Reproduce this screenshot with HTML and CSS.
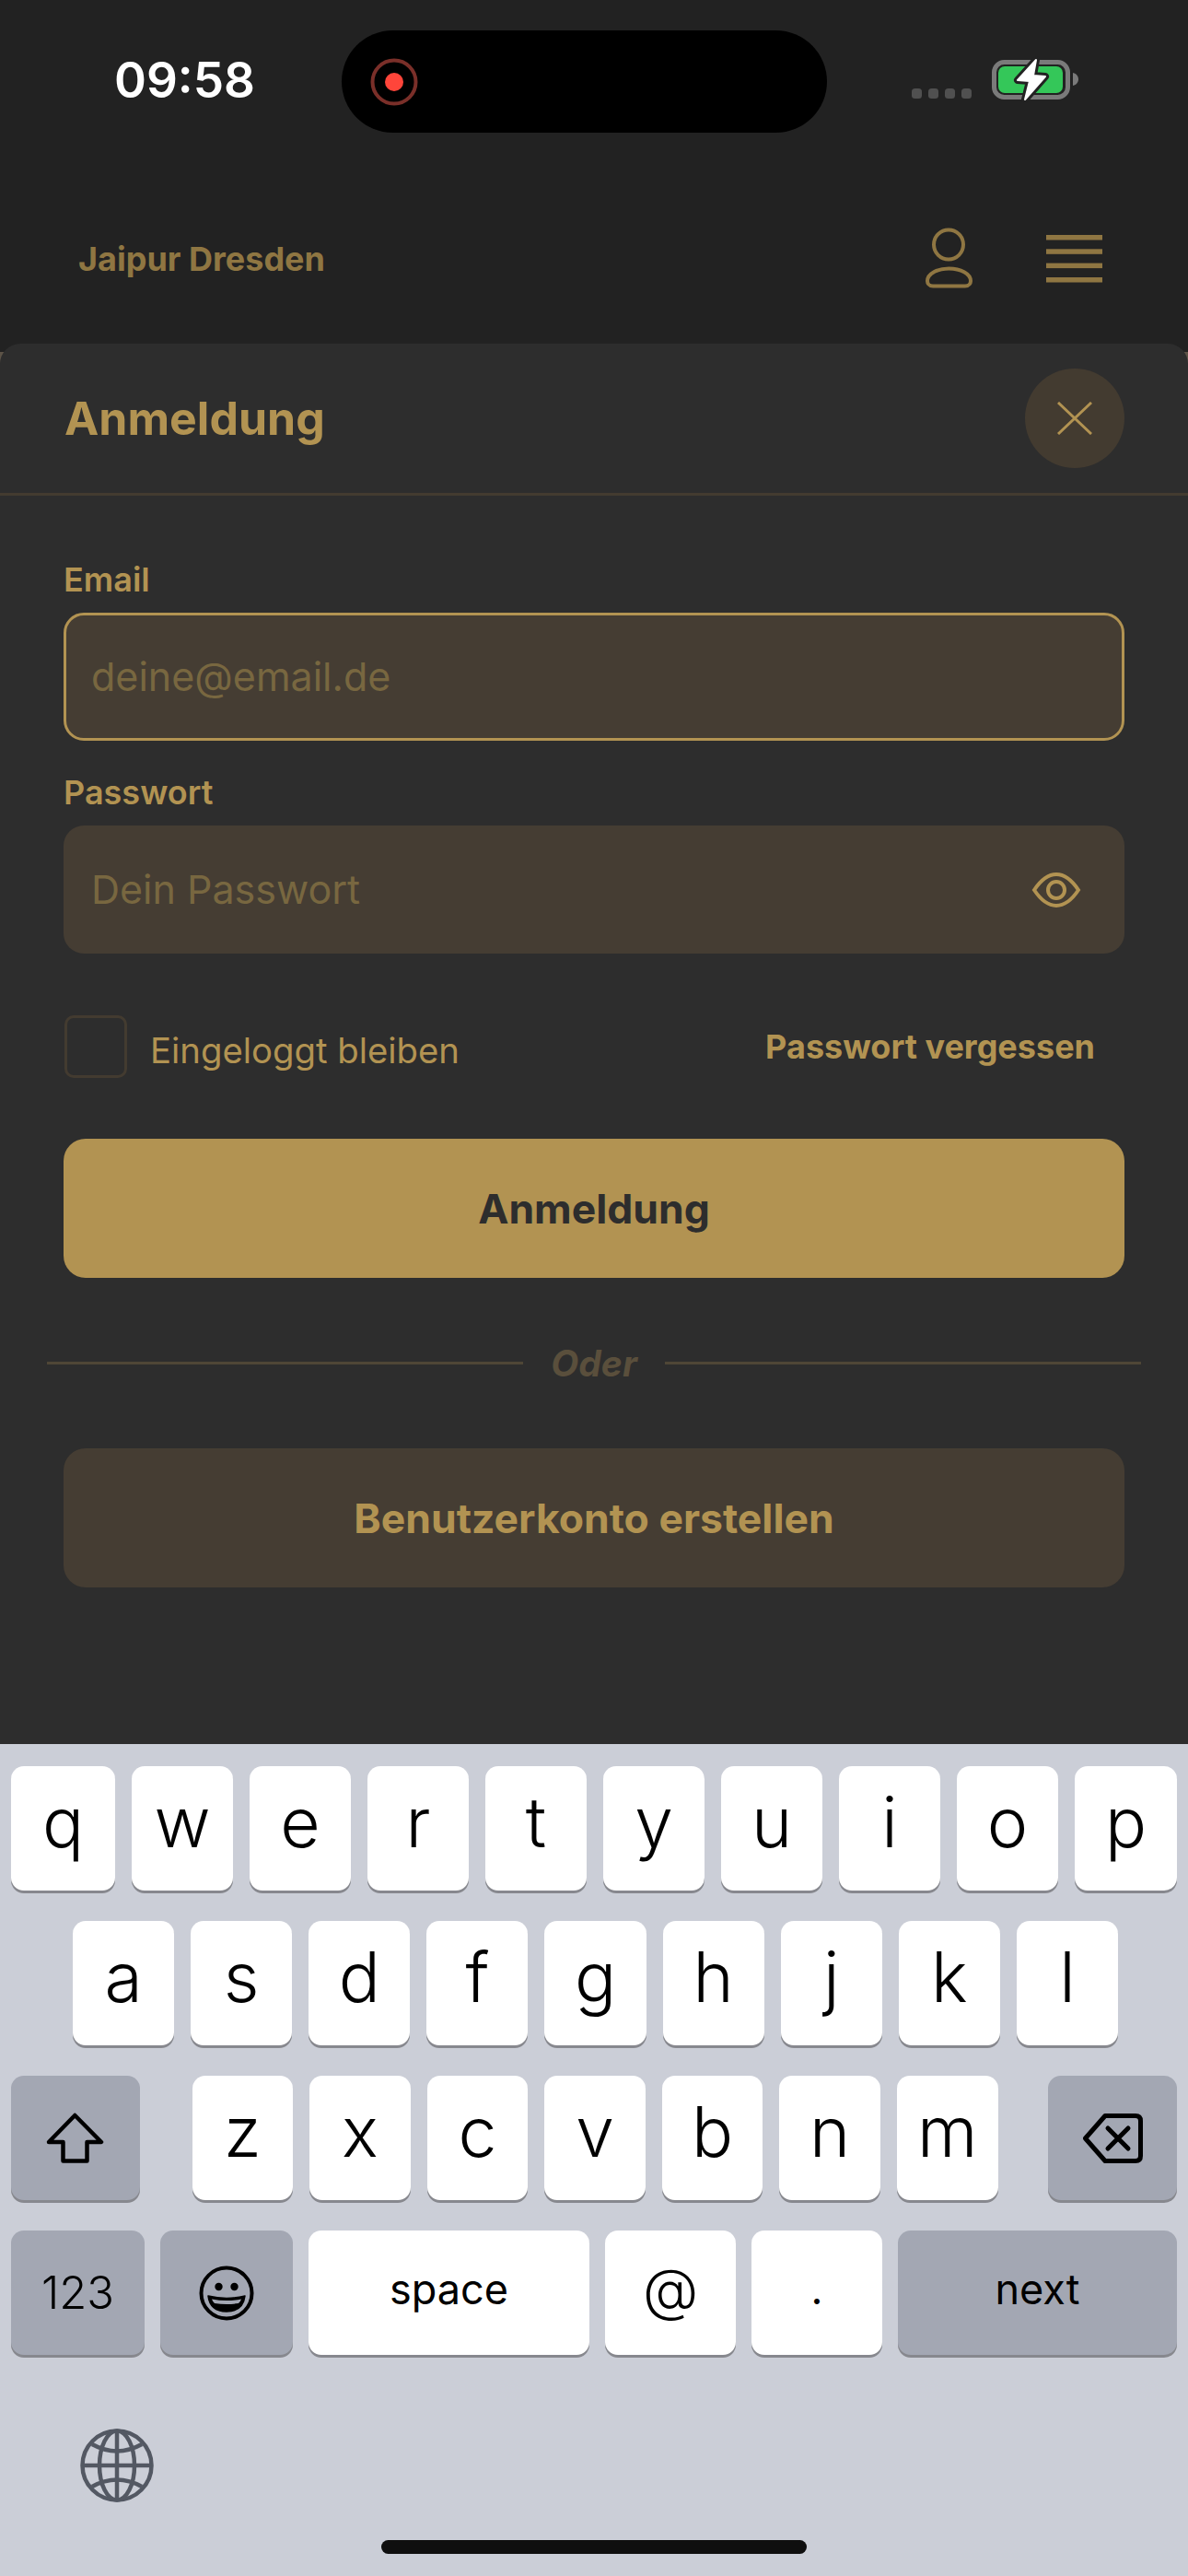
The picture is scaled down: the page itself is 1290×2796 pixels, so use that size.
FILE: index.html
```html
<!DOCTYPE html>
<html lang="de">
<head>
    <meta charset="UTF-8">
    <meta name="viewport" content="width=device-width, initial-scale=1.0">
    <title>Anmeldung</title>
    <link rel="stylesheet" href="styles.css">
</head>
<body>
    <div class="status-bar">
        <div class="time">09:58</div>
        <div class="island">
            <svg class="record" width="52" height="52" viewBox="0 0 52 52">
                <circle cx="26" cy="26" r="23.5" fill="none" stroke="#7a2f29" stroke-width="4"/>
                <circle cx="26" cy="26" r="10" fill="#ff453a"/>
            </svg>
        </div>
        <svg class="status-icons" width="186" height="52" viewBox="988 60 186 52">
            <rect x="990" y="96" width="11" height="11" rx="3.5" fill="#505050"/>
            <rect x="1008" y="96" width="11" height="11" rx="3.5" fill="#505050"/>
            <rect x="1026" y="96" width="11" height="11" rx="3.5" fill="#505050"/>
            <rect x="1044" y="96" width="11" height="11" rx="3.5" fill="#505050"/>
            <rect x="1079.5" y="67.5" width="80" height="38" rx="11" fill="none" stroke="#7a7a7a" stroke-width="5"/>
            <rect x="1084" y="72" width="70" height="29" rx="7" fill="#34c759"/>
            <path d="M1165 79 C1169 80 1171 83 1171 86 C1171 89 1169 92 1165 93 Z" fill="#7a7a7a"/>
            <path d="M1125 65 L1105 87 L1118 88 L1113 108 L1135 83 L1122 82 Z" fill="#fff" stroke="#222" stroke-width="8" stroke-linejoin="round" paint-order="stroke"/>
            <path d="M1125 65 L1105 87 L1118 88 L1113 108 L1135 83 L1122 82 Z" fill="#fff" stroke="#fff" stroke-width="2" stroke-linejoin="round"/>
        </svg>
    </div>

    <div class="top-bar">
        <div class="brand">Jaipur Dresden</div>
        <div class="top-icons">
            <svg width="56" height="68" viewBox="0 0 56 68" fill="none" stroke="#8f7642" stroke-width="4">
                <circle cx="27" cy="18.5" r="16"/>
                <path d="M10 63.5 H45 C49.5 63.5 51 60 51 58 C51 50 40 44.5 27.5 44.5 C15 44.5 4 50 4 58 C4 60 5.5 63.5 10 63.5 Z"/>
            </svg>
            <svg width="61" height="52" viewBox="0 0 61 52" fill="#8f7642">
                <rect y="0" width="61" height="5.5"/>
                <rect y="15.3" width="61" height="5.5"/>
                <rect y="30.6" width="61" height="5.5"/>
                <rect y="46" width="61" height="5.5"/>
            </svg>
        </div>
    </div>

    <div class="page">
        <div class="sheet">
            <div class="sheet-head">
                <h1>Anmeldung</h1>
                <button class="close-btn" aria-label="Schließen">
                    <svg width="38" height="36" viewBox="0 0 38 36" stroke="#b29352" stroke-width="3">
                        <path d="M1 1 L37 35 M37 1 L1 35"/>
                    </svg>
                </button>
            </div>

            <div class="form">
                <label class="field-label">Email</label>
                <div class="input-box focused">
                    <input type="email" placeholder="deine@email.de">
                </div>

                <label class="field-label second">Passwort</label>
                <div class="input-box">
                    <input type="password" placeholder="Dein Passwort">
                    <svg class="eye" width="54" height="40" viewBox="-27 -20 54 40" fill="none" stroke="#b29352" stroke-width="4">
                        <path d="M-24 0 C-16 -12 -8 -17 0 -17 C8 -17 16 -12 24 0 C16 12 8 17 0 17 C-8 17 -16 12 -24 0 Z"/>
                        <circle r="9"/>
                    </svg>
                </div>

                <div class="options">
                    <div class="checkbox"></div>
                    <span class="remember">Eingeloggt bleiben</span>
                    <a class="forgot" href="#">Passwort vergessen</a>
                </div>

                <button class="btn btn-primary">Anmeldung</button>

                <div class="or-row">
                    <span class="or-line"></span>
                    <span class="or-text">Oder</span>
                    <span class="or-line"></span>
                </div>

                <button class="btn btn-secondary">Benutzerkonto erstellen</button>
            </div>
        </div>
    </div>

    <div class="keyboard">
        <div class="kb-row row-one">
            <div class="key">q</div><div class="key">w</div><div class="key">e</div><div class="key">r</div><div class="key">t</div>
            <div class="key">y</div><div class="key">u</div><div class="key">i</div><div class="key">o</div><div class="key">p</div>
        </div>
        <div class="kb-row row-two">
            <div class="key">a</div><div class="key">s</div><div class="key">d</div><div class="key">f</div><div class="key">g</div>
            <div class="key">h</div><div class="key">j</div><div class="key">k</div><div class="key">l</div>
        </div>
        <div class="kb-row row-three">
            <div class="key fn shift">
                <svg width="64" height="56" viewBox="0 0 64 56" fill="none" stroke="#000" stroke-width="4.5" stroke-linejoin="round">
                    <path d="M31.3 3 L60 32 H44.5 V52.5 H18.5 V32 H3 Z"/>
                </svg>
            </div>
            <div class="letters">
                <div class="key">z</div><div class="key">x</div><div class="key">c</div><div class="key">v</div>
                <div class="key">b</div><div class="key">n</div><div class="key">m</div>
            </div>
            <div class="key fn backspace">
                <svg width="65" height="54" viewBox="0 0 65 54" fill="none" stroke="#000" stroke-width="5" stroke-linejoin="round" stroke-linecap="round">
                    <path d="M2.5 27 L24 2.5 H57 Q62.5 2.5 62.5 8 V46 Q62.5 51.5 57 51.5 H24 Z"/>
                    <path d="M27 16 L49 38 M49 16 L27 38"/>
                </svg>
            </div>
        </div>
        <div class="kb-row row-four">
            <div class="key fn small num">123</div>
            <div class="key fn emoji">
                <svg width="60" height="60" viewBox="-30 -30 60 60">
                    <circle r="27.5" fill="none" stroke="#000" stroke-width="4"/>
                    <circle cx="-8.5" cy="-7" r="4.2"/>
                    <circle cx="8.5" cy="-7" r="4.2"/>
                    <path d="M-20 3 Q0 8 20 3 Q18 20 0 20 Q-18 20 -20 3 Z" stroke="#000" stroke-width="1.5" stroke-linejoin="round"/>
                    <path d="M-16 6.5 Q0 9.5 16 6.5 Q15 9.5 13 11 Q0 13 -13 11 Q-15 9.5 -16 6.5 Z" fill="#a3a7b3"/>
                </svg>
            </div>
            <div class="key small wide">space</div>
            <div class="key small at">@</div>
            <div class="key small dot">.</div>
            <div class="key fn small next">next</div>
        </div>

        <div class="kb-bottom">
            <svg width="80" height="80" viewBox="-40 -40 80 80" fill="none" stroke="#535863" stroke-width="4.5">
                <circle r="37.5"/>
                <ellipse rx="19" ry="37.5"/>
                <path d="M0 -37.5 V37.5 M-37.5 0 H37.5"/>
                <path d="M-27 -23 Q0 -8 27 -23 M-27 23 Q0 8 27 23"/>
            </svg>
        </div>
        <div class="home-bar"></div>
    </div>
</body>
</html>
```

FILE: styles.css
```css
* {
    box-sizing: border-box;
}

body {
    margin: 0;
    width: 1290px;
    height: 2796px;
    overflow: hidden;
    background-color: #222222;
    font-family: 'Inter', sans-serif;
}

/* status bar */
.status-bar {
    display: flex;
    align-items: flex-start;
    height: 144px;
    padding: 33px 0 0 124px;
}

.time {
    width: 247px;
    color: #FFFFFF;
    font-size: 53px;
    font-weight: 600;
    line-height: 109px;
}

.island {
    display: flex;
    align-items: center;
    width: 527px;
    height: 111px;
    padding-left: 31px;
    background-color: #000000;
    border-radius: 56px;
}

.status-icons {
    margin: 27px 0 0 90px;
}

/* top bar */
.top-bar {
    display: flex;
    justify-content: space-between;
    align-items: center;
    height: 238px;
    padding: 35px 93px 0 85px;
}

.brand {
    color: #8f7642;
    font-size: 36px;
    font-weight: 700;
}

.top-icons {
    display: flex;
    align-items: center;
    gap: 77px;
}

/* sheet */
.page {
    display: flow-root;
    height: 1511px;
    background-color: #5c5347;
}

.sheet {
    height: 1520px;
    margin-top: -9px;
    background-color: #2d2d2d;
    border-radius: 22px 22px 0 0;
}

.sheet-head {
    display: flex;
    justify-content: space-between;
    align-items: center;
    height: 165px;
    padding: 0 69px 0 70px;
    border-bottom: 3px solid #433b30;
}

.sheet-head h1 {
    margin: 0;
    color: #b29352;
    font-size: 50px;
    font-weight: 700;
}

.close-btn {
    display: flex;
    justify-content: center;
    align-items: center;
    width: 108px;
    height: 108px;
    padding: 0;
    background-color: #433b30;
    border: none;
    border-radius: 50%;
}

.form {
    display: flex;
    flex-direction: column;
    padding: 71px 69px 0;
}

.field-label {
    margin-bottom: 16px;
    color: #b29352;
    font-size: 36px;
    font-weight: 600;
    line-height: 40px;
}

.field-label.second {
    margin-top: 36px;
}

.input-box {
    display: flex;
    align-items: center;
    height: 139px;
    padding-right: 44px;
    background-color: #453d33;
    border: 3px solid transparent;
    border-radius: 22px;
}

.input-box.focused {
    border-color: #b29352;
}

.input-box input {
    flex: 1;
    min-width: 0;
    padding: 0 0 2px 27px;
    background: none;
    border: none;
    outline: none;
    color: #b29352;
    font-family: 'Inter', sans-serif;
    font-size: 43px;
}

.input-box input::placeholder {
    color: #786740;
    opacity: 1;
}

.options {
    display: flex;
    align-items: center;
    margin-top: 67px;
    padding: 0 32px 0 1px;
}

.checkbox {
    width: 68px;
    height: 68px;
    background-color: #2d2d2d;
    border: 3px solid #433b30;
    border-radius: 10px;
}

.remember {
    margin: 7px 0 0 25px;
    color: #b29352;
    font-size: 38.3px;
}

.forgot {
    margin-left: auto;
    color: #b29352;
    font-size: 36px;
    font-weight: 700;
    text-decoration: none;
}

.btn {
    height: 151px;
    border: none;
    border-radius: 24px;
    font-family: 'Inter', sans-serif;
    font-size: 44.5px;
    font-weight: 700;
}

.btn-primary {
    margin-top: 66px;
    background-color: #b29352;
    color: #2d2d2d;
}

.btn-secondary {
    background-color: #453d33;
    color: #b29352;
}

.or-row {
    display: flex;
    align-items: center;
    gap: 30px;
    height: 40px;
    margin: 72px -18px 73px;
}

.or-line {
    flex: 1;
    height: 3px;
    background-color: #4f4636;
}

.or-text {
    color: #5a4f3c;
    font-size: 39px;
    font-style: italic;
    font-weight: 700;
}

/* keyboard */
.keyboard {
    position: relative;
    height: 903px;
    padding: 24px 12px 0;
    background-color: #cbced7;
}

.kb-row {
    display: flex;
    gap: 18px;
    height: 135px;
    margin-bottom: 33px;
}

.key {
    flex: 1;
    display: flex;
    justify-content: center;
    align-items: center;
    padding-bottom: 15px;
    background-color: #FFFFFF;
    border-radius: 14px;
    box-shadow: 0 3px 0 #87888e;
    color: #000000;
    font-size: 75px;
    font-weight: 300;
}

.row-one > .key:first-child {
    flex: 0 0 113px;
}

.row-one > .key:last-child {
    flex: 0 0 111px;
}

.row-two {
    padding: 0 64px 0 67px;
}

.row-three {
    justify-content: space-between;
}

.letters {
    display: flex;
    gap: 18px;
    width: 875px;
    margin-left: 2px;
}

.key.fn {
    padding-bottom: 0;
    background-color: #a3a7b3;
}

.shift,
.backspace {
    flex: 0 0 140px;
}

.row-four {
    gap: 17px;
}

.num {
    flex: 0 0 145px;
}

.emoji {
    flex: 0 0 144px;
}

.wide {
    flex: 0 0 305px;
}

.at,
.dot {
    flex: 0 0 142px;
}

.small {
    font-size: 45px;
    font-weight: 400;
    padding-bottom: 8px;
}

.key.num {
    font-size: 49px;
    font-weight: 300;
}

.key.next {
    padding-bottom: 8px;
}

.key.at {
    font-size: 62px;
    font-weight: 300;
}

.kb-bottom {
    display: flex;
    padding: 47px 0 0 75px;
}

.home-bar {
    position: absolute;
    left: 414px;
    bottom: 24px;
    width: 462px;
    height: 15px;
    background-color: #0f0f0f;
    border-radius: 8px;
}
```
